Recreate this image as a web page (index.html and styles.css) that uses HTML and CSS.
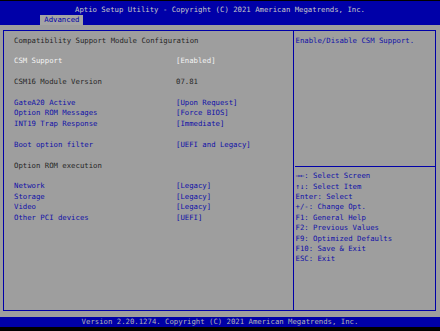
FILE: index.html
```html
<!DOCTYPE html>
<html lang="en">

<head>
    <meta charset="UTF-8">
    <meta name="viewport" content="width=device-width, initial-scale=1.0">
    <title>Aptio Setup Utility</title>
    <link rel="stylesheet" href="styles.css">
</head>

<body>
    <div class="screen">
        <div class="top">
            <p class="title">Aptio Setup Utility - Copyright (C) 2021 American Megatrends, Inc.</p>
            <div class="tabs">
                <span class="tab">Advanced</span>
            </div>
        </div>

        <div class="main">
            <div class="frame">
                <div class="left">
                    <p class="row dark">Compatibility Support Module Configuration</p>
                    <p class="row"></p>
                    <p class="row white"><span class="label">CSM Support</span><span>[Enabled]</span></p>
                    <p class="row"></p>
                    <p class="row dark"><span class="label">CSM16 Module Version</span><span>07.81</span></p>
                    <p class="row"></p>
                    <p class="row blue"><span class="label">GateA20 Active</span><span>[Upon Request]</span></p>
                    <p class="row blue"><span class="label">Option ROM Messages</span><span>[Force BIOS]</span></p>
                    <p class="row blue"><span class="label">INT19 Trap Response</span><span>[Immediate]</span></p>
                    <p class="row"></p>
                    <p class="row blue"><span class="label">Boot option filter</span><span>[UEFI and Legacy]</span></p>
                    <p class="row"></p>
                    <p class="row dark">Option ROM execution</p>
                    <p class="row"></p>
                    <p class="row blue"><span class="label">Network</span><span>[Legacy]</span></p>
                    <p class="row blue"><span class="label">Storage</span><span>[Legacy]</span></p>
                    <p class="row blue"><span class="label">Video</span><span>[Legacy]</span></p>
                    <p class="row blue"><span class="label">Other PCI devices</span><span>[UEFI]</span></p>
                </div>
                <div class="right">
                    <div class="desc">
                        <p class="row">Enable/Disable CSM Support.</p>
                    </div>
                    <div class="sep"></div>
                    <div class="help">
                        <p class="row">→←: Select Screen</p>
                        <p class="row">↑↓: Select Item</p>
                        <p class="row">Enter: Select</p>
                        <p class="row">+/-: Change Opt.</p>
                        <p class="row">F1: General Help</p>
                        <p class="row">F2: Previous Values</p>
                        <p class="row">F9: Optimized Defaults</p>
                        <p class="row">F10: Save &amp; Exit</p>
                        <p class="row">ESC: Exit</p>
                    </div>
                </div>
            </div>
        </div>

        <div class="bottom">
            <p>Version 2.20.1274. Copyright (C) 2021 American Megatrends, Inc.</p>
        </div>
    </div>
</body>

</html>
```

FILE: styles.css
```css
* {
    margin: 0;
    padding: 0;
    box-sizing: border-box;
}

body {
    background-color: #000;
    font-family: "DejaVu Sans Mono", "Liberation Mono", monospace;
    font-size: 7.3px;
}

.screen {
    width: 440px;
    height: 331px;
    padding-top: 1px;
    background-color: #000;
}

/* 顶部标题栏 */
.top {
    height: 24px;
    padding-top: 3.8px;
    background-color: #0000a8;
}

.title {
    line-height: 10.4px;
    color: #c8c8c8;
    text-align: center;
    white-space: pre;
}

.tabs {
    display: flex;
    padding-left: 40px;
}

.tab {
    height: 9.8px;
    line-height: 10px;
    padding: 0 4px 0 4.3px;
    color: #0000a8;
    background-color: #a4a4a4;
}

/* 中间灰色区域 */
.main {
    height: 291.7px;
    padding: 5px 4px 5.4px 2.5px;
    background-color: #9e9e9e;
    display: flex;
}

.frame {
    flex: 1;
    display: flex;
    border: 1px solid #0000a8;
}

.row {
    height: 10.43px;
    line-height: 10.43px;
    white-space: pre;
    display: flex;
}

.left {
    width: 289px;
    padding: 4.5px 0 0 10.5px;
}

.label {
    width: 162px;
}

.dark {
    color: #262626;
}

.white {
    color: #f4f4f4;
}

.blue {
    color: #1010a8;
}

.right {
    flex: 1;
    display: flex;
    flex-direction: column;
    padding-top: 4.5px;
    border-left: 1px solid #0000a8;
    color: #1010a8;
}

.right .row {
    padding-left: 2px;
}

.desc {
    height: 130.4px;
}

.sep {
    margin-left: 1px;
    border-top: 1px solid #0000a8;
}

.help {
    margin-top: 4.2px;
}

/* 底部版本栏 */
.bottom {
    height: 10.3px;
    background-color: #0000a8;
}

.bottom p {
    line-height: 10.3px;
    color: #b4b4b4;
    text-align: center;
    white-space: pre;
}
```
